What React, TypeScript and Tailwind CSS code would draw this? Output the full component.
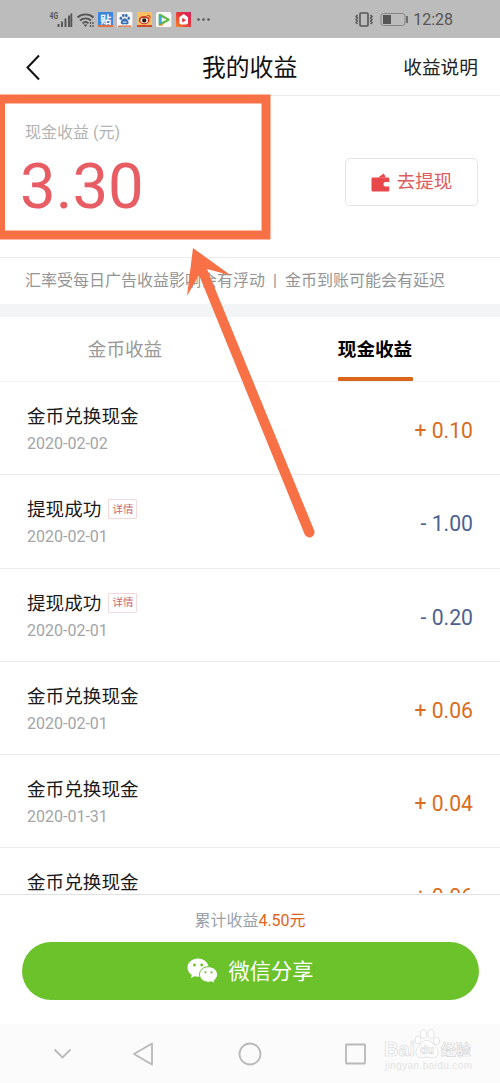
import { clsx } from "clsx";

type RecordItem = {
  title: string;
  date: string;
  amount: string;
  detail?: boolean;
};

const records: RecordItem[] = [
  { title: "金币兑换现金", date: "2020-02-02", amount: "+ 0.10" },
  { title: "提现成功", date: "2020-02-01", amount: "- 1.00", detail: true },
  { title: "提现成功", date: "2020-02-01", amount: "- 0.20", detail: true },
  { title: "金币兑换现金", date: "2020-02-01", amount: "+ 0.06" },
  { title: "金币兑换现金", date: "2020-01-31", amount: "+ 0.04" },
  { title: "金币兑换现金", date: "2020-01-31", amount: "+ 0.06" },
];

export default function App() {
  return (
    <div className="relative flex h-[1083px] w-[500px] flex-col overflow-hidden bg-white font-['Roboto','Noto_Sans_CJK_SC',sans-serif] whitespace-nowrap">
      <StatusBar />
      <header className="flex h-[58px] shrink-0 items-center border-b border-[#ececec] pr-[22px] pl-[25px]">
        <svg className="h-7 w-[74px]" viewBox="0 0 74 28" fill="none">
          <path d="M14 2.5 2.5 14.5 14 26.5" stroke="#111" strokeWidth="2" />
        </svg>
        <h1 className="ml-[103px] pt-1 text-[23.8px] text-[#111]">我的收益</h1>
        <span className="ml-auto pt-[3px] text-[18.7px] text-[#222]">收益说明</span>
      </header>

      <section className="flex h-[162px] shrink-0 border-b border-[#ececec] pr-[22px] pl-[25px]">
        <div className="pt-[25px]">
          <p className="text-[16px] leading-6 text-[#b3b3b3]">现金收益 (元)</p>
          <p className="-ml-[5px] pt-[6px] text-[63.5px] leading-[72px] text-[#e85d63]">3.30</p>
        </div>
        <button className="mt-[62px] ml-auto flex h-[48px] w-[133px] items-center justify-center rounded-[5px] border border-[#e4e4e4]">
          <WalletIcon />
          <span className="ml-[7px] pt-0.5 text-[18.5px] text-[#df5a5e]">去提现</span>
        </button>
      </section>

      <p className="h-[46px] shrink-0 pl-[25px] text-[16px] leading-[46px] text-[#949494]">
        汇率受每日广告收益影响会有浮动<span className="mx-[8px]">|</span>金币到账可能会有延迟
      </p>
      <div className="h-[13px] shrink-0 bg-[#f3f4f6]" />

      <nav className="flex h-[65px] shrink-0 border-b border-[#f2f2f2] text-[18.6px]">
        <div className="flex w-1/2 justify-center leading-[66px] text-[#999]">金币收益</div>
        <div className="flex w-1/2 flex-col items-center font-bold text-black">
          <span className="h-[60px] leading-[66px]">现金收益</span>
          <span className="h-1 w-[75px] rounded-[1px] bg-[#dc651c]" />
        </div>
      </nav>

      <ul className="mb-px h-[511px] shrink-0 overflow-hidden">
        {records.map((item, i) => (
          <Row key={i} {...item} />
        ))}
      </ul>

      <footer className="flex h-[130px] shrink-0 flex-col items-center border-t border-[#dfe1e3] bg-white">
        <p className="h-[47px] text-[16px] leading-[52px] text-[#9aa1a9]">
          累计收益<span className="text-[#de641c]">4.50元</span>
        </p>
        <button className="flex h-[58px] w-[457px] items-center justify-center rounded-full bg-[#6bc22b] text-white">
          <WechatIcon />
          <span className="ml-[11px] pt-[2px] text-[21.2px]">微信分享</span>
        </button>
      </footer>

      <SystemNav />
      <Arrow />
    </div>
  );
}

const Row = ({ title, date, amount, detail }: RecordItem) => {
  return (
    <li className="flex h-[93.25px] justify-between border-b border-[#ebebeb] pr-[27px] pl-[27px]">
      <div className="pt-5">
        <div className="flex h-7 items-center">
          <span className="pt-1 text-[18.6px] text-[#1a1a1a]">{title}</span>
          {detail && (
            <span className="ml-[7px] flex h-5 w-[29px] items-center justify-center rounded-[1px] border border-[#f3d9da] pt-px text-[10.5px] text-[#c9666c]">
              详情
            </span>
          )}
        </div>
        <p className="text-[16px] leading-7 text-[#a3a5a8]">{date}</p>
      </div>
      <span
        className={clsx(
          "pt-[3px] text-[21.2px] leading-[92px]",
          amount.startsWith("+") ? "text-[#d96c20]" : "text-[#4d6290]"
        )}
      >
        {amount}
      </span>
    </li>
  );
};

const StatusBar = () => {
  return (
    <div className="flex h-[38px] shrink-0 items-center bg-[#bcbcbc] pt-px pr-[47px] pl-[49px] text-[#555]">
      {/* signal + wifi */}
      <svg className="h-[18px] w-[46px] overflow-visible" viewBox="0 0 46 18" fill="none">
        <text x="0.5" y="8" fontSize="9" fontWeight="700" fill="#555" textLength="8.5" lengthAdjust="spacingAndGlyphs">
          4G
        </text>
        <path d="M9.5 13v3M13 10.5V16M16.5 7.5V16M20 4.5V16M22.3 2.5V16" stroke="#555" strokeWidth="1.9" />
        <g stroke="#555" strokeWidth="1.8">
          <path d="M28.5 6.5a12 12 0 0 1 16 0" />
          <path d="M31 9.5a8 8 0 0 1 11 0" />
          <path d="M33.5 12.4a4.5 4.5 0 0 1 6 0" />
        </g>
        <path d="m34.5 13.5 2 2.5 2-2.5z" fill="#555" />
        <path d="M41.5 11v5M44 11v5" stroke="#555" strokeWidth="1.3" strokeDasharray="2 1" />
      </svg>
      <div className="ml-[3px] flex gap-1">
        <span className="flex size-[15.4px] items-center justify-center border-b-2 border-[#e0713f] bg-[#3c86dc] pt-[3px] text-[11px] leading-none font-bold text-white">
          贴
        </span>
        <svg className="size-[15.4px]" viewBox="0 0 16 16">
          <rect width="16" height="16" rx="1.5" fill="#f7f7f7" />
          <g fill="#3a6fb5">
            <ellipse cx="4" cy="6.5" rx="1.3" ry="1.8" />
            <ellipse cx="6.6" cy="3.6" rx="1.3" ry="1.9" />
            <ellipse cx="9.7" cy="3.6" rx="1.3" ry="1.9" />
            <ellipse cx="12.2" cy="6.5" rx="1.3" ry="1.8" />
            <path d="M8 6.5c2 0 4.5 3 4 5-.4 2-2.5 1.3-4 1.3s-3.6.7-4-1.3c-.5-2 2-5 4-5z" />
          </g>
          <path d="M6 10.5h4" stroke="#fff" />
          <path d="M1 14h14v1.5H1z" fill="#d8794a" />
        </svg>
        <svg className="size-[15.4px]" viewBox="0 0 16 16">
          <rect width="16" height="16" rx="1.5" fill="#f6c063" />
          <ellipse cx="7.5" cy="8.5" rx="5.5" ry="4.3" fill="#c73424" />
          <ellipse cx="7.5" cy="8.8" rx="4" ry="2.9" fill="#f3e9dc" />
          <circle cx="7.5" cy="8.8" r="2.2" fill="#2b1b18" />
          <path d="M10.5 3.5c2-.5 3.5 1 3 3" stroke="#d7501f" strokeWidth="1.3" fill="none" />
          <path d="M0 13.5h16V16H0z" fill="#cf4a2a" />
        </svg>
        <svg className="size-[15.4px]" viewBox="0 0 16 16">
          <rect width="16" height="16" rx="2.5" fill="#f8f8f8" />
          <path d="M4 3v10l9-5z" fill="#63b944" stroke="#63b944" strokeWidth="2.5" strokeLinejoin="round" />
          <path d="M3 2.5 6 4.5v7l-3 2z" fill="#3ea6e0" />
          <path d="M3 13.8 9 11.5l-3 3z" fill="#f0912e" />
          <path d="m6 5.5 5 2.5-5 2.5z" fill="#fff" />
        </svg>
        <svg className="size-[15.4px]" viewBox="0 0 16 16">
          <defs>
            <linearGradient id="videoBg" x1="0" y1="1" x2="1" y2="0">
              <stop offset="0" stopColor="#f58a2a" />
              <stop offset="0.5" stopColor="#e8363a" />
              <stop offset="1" stopColor="#d42060" />
            </linearGradient>
          </defs>
          <rect width="16" height="16" rx="1.5" fill="url(#videoBg)" />
          <path d="M8 2 12.5 5.5V11c0 1.5-1 2-2 2h-5c-1 0-2-.5-2-2V5.5z" fill="#fff" />
          <path d="m6.500 6 4 2.500-4 2.500z" fill="#e33342" />
        </svg>
      </div>
      <svg className="ml-[6px] h-1 w-[13px]" viewBox="0 0 13 4" fill="#555">
        <circle cx="1.5" cy="1.5" r="1.3" />
        <circle cx="6.5" cy="1.5" r="1.3" />
        <circle cx="11.5" cy="1.5" r="1.3" />
      </svg>

      {/* vibrate + battery */}
      <svg className="ml-auto h-4 w-[54px]" viewBox="0 0 54 16" fill="none" stroke="#555">
        <rect x="5" y="1" width="8" height="13" rx="1" strokeWidth="1.6" />
        <path d="M2.5 3 1 4.500 2.500 6 1 7.500 2.500 9 1 10.500 2.500 12" strokeWidth="1.500" />
        <path d="M15.500 3 17 4.500 15.500 6 17 7.500 15.500 9l1.500 1.500-1.500 1.500" strokeWidth="1.500" />
        <rect x="26" y="1.5" width="24" height="12" rx="2.5" stroke="#858585" />
        <rect x="28" y="3" width="8" height="9" fill="#555" stroke="none" />
        <path d="M52 4v7" strokeWidth="1.5" />
      </svg>
      <span className="ml-[4px] text-[16px]">12:28</span>
    </div>
  );
};

const WalletIcon = () => {
  return (
    <svg className="h-[19px] w-[19px]" viewBox="0 0 19 19">
      <path d="m7 4.500 5.800-4 2 4z" fill="#e8484c" />
      <path
        d="M2 4.500h15c.8 0 1.300.5 1.300 1.300v3.200h-3.600a2.300 2.300 0 0 0 0 4.600h3.600v3.600c0 .8-.5 1.300-1.300 1.300H2c-.8 0-1.500-.5-1.500-1.300V5.800c0-.8.7-1.300 1.500-1.300z"
        fill="#e8484c"
      />
    </svg>
  );
};

const WechatIcon = () => {
  return (
    <svg className="h-[26px] w-[31px]" viewBox="0 0 31 26">
      <path
        d="M11 .5c5.900 0 10.500 4 10.500 9s-4.600 9.200-10.500 9.200c-1.200 0-2.400-.2-3.500-.5L4 20l.8-3.200C2.200 15.200.5 12.600.5 9.700.5 4.500 5.100.5 11 .5z"
        fill="#fff"
      />
      <path
        d="M21.500 8.700c5 0 9 3.500 9 7.800 0 2.400-1.300 4.500-3.300 6l.6 2.900-3.200-1.600c-1 .3-2 .4-3.100.4-5 0-9-3.400-9-7.700s4-7.800 9-7.800z"
        fill="#fff"
        stroke="#6bc22b"
      />
      <g fill="#6bc22b">
        <circle cx="7.5" cy="7" r="1.4" />
        <circle cx="14.7" cy="7" r="1.4" />
        <circle cx="18.5" cy="14.3" r="1.1" />
        <circle cx="24.5" cy="14.3" r="1.1" />
      </g>
    </svg>
  );
};

const SystemNav = () => {
  return (
    <div className="relative flex h-[59px] shrink-0 items-center bg-[#fbfbfb] pl-[53px]">
      <svg className="h-6 w-[315px]" viewBox="0 0 315 24" fill="none" stroke="#b9b9b9" strokeWidth="1.8">
        <path d="m1.5 7.5 8 8 8-8" />
        <path d="M99 1.5v21L81 12z" strokeLinejoin="round" />
        <circle cx="197" cy="12" r="10.5" />
        <rect x="293" y="2.5" width="19" height="19" rx="0.5" />
      </svg>
      <Watermark />
    </div>
  );
};

const Watermark = () => {
  return (
    <svg
      className="absolute top-1 left-[382px] h-12 w-24 font-['Liberation_Sans','Noto_Sans_CJK_SC',sans-serif]"
      viewBox="0 0 96 48"
      fill="#fff"
      stroke="#d9d9d9"
      strokeWidth="0.7"
    >
      <text x="2" y="28" fontSize="21" fontWeight="700" textLength="31" lengthAdjust="spacingAndGlyphs">
        Bai
      </text>
      <ellipse cx="36" cy="12" rx="3" ry="4" />
      <ellipse cx="41.5" cy="6" rx="3" ry="4.3" />
      <ellipse cx="49" cy="6" rx="3" ry="4.3" />
      <ellipse cx="54.5" cy="13" rx="3" ry="4" />
      <path d="M45 12.5c5 0 6 4 9 7s3 9-2 10c-3 .5-4-.5-7-.5s-4 1-7 .5c-5-1-5-7-2-10s4-7 9-7z" />
      <text x="38" y="26" fontSize="12" fontWeight="700" textLength="14" lengthAdjust="spacingAndGlyphs">
        du
      </text>
      <text x="59" y="27" fontSize="15" fontWeight="700">
        经验
      </text>
      <text x="3" y="41" fontSize="10" fill="#e5e5e5" stroke="none" textLength="87">
        jingyan.baidu.com
      </text>
    </svg>
  );
};

// annotation drawn over the page: box around the balance and an arrow to it
const Arrow = () => {
  return (
    <svg className="pointer-events-none absolute top-0 left-0 h-[560px] w-[330px]" viewBox="0 0 330 560">
      <rect x="0.5" y="99" width="265.5" height="136" fill="none" stroke="#f87146" strokeWidth="9" />
      <path
        d="M193 248 231 275.5 207 269 314 530a5 5 0 0 1-9.300 4.500L199 275 187 296z"
        fill="#f87146"
      />
    </svg>
  );
};
